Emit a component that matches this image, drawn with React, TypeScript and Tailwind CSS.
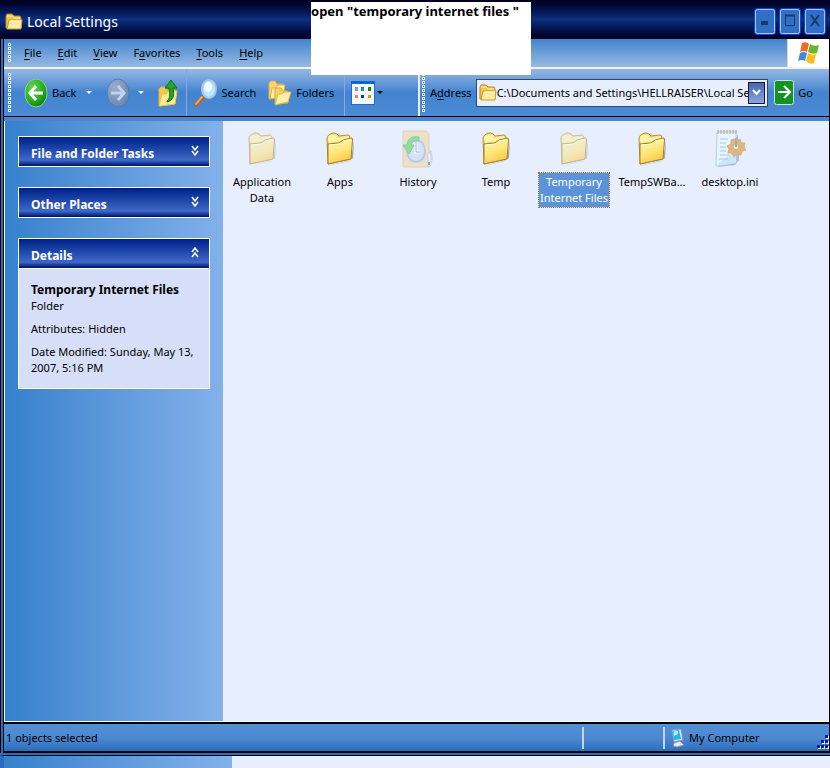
import type { ReactNode } from "react"

function FolderIcon({ faded = false }: { faded?: boolean }) {
  return (
    <svg width="30" height="34" viewBox="0 0 30 34" opacity={faded ? 0.5 : 1}>
      <defs>
        <linearGradient id="folderFront" x1="0" y1="0" x2="0.4" y2="1">
          <stop offset="0" stopColor="#fffbb4" />
          <stop offset="0.6" stopColor="#fee67a" />
          <stop offset="1" stopColor="#fbcb48" />
        </linearGradient>
      </defs>
      <path d="M3 34 L24 29 L28 26 L29 8 L26 28 Z" fill="#6c6e84" opacity="0.6" />
      <path d="M2 6 Q2 4 4 3 L6 1.500 Q9 0 12 2 L14 4 L23 3 Q25 3 25 6 L25 27 L3 32 Z" fill="#f9dc66" stroke="#b5933a" />
      <path d="M3 7 Q3 4 6 3 L11 3 L13 6 L23 4 L24 7 L4 11 Z" fill="#fff5aa" />
      <path d="M3 12 L14 11 L18 8 L26 6 Q28 6 27.500 8 L26 27 L3 32 Z" fill="url(#folderFront)" stroke="#a07d26" />
      <path d="M4 13 L14.500 12 L18.500 9 L26 7.500" fill="none" stroke="#fffdd8" />
    </svg>
  )
}

function HistoryIcon() {
  return (
    <svg width="32" height="38" viewBox="0 0 32 38" opacity="0.6">
      <path d="M25 35 L31 30 L30 21 L26 19 Z" fill="#c3c8d8" />
      <path d="M1 1 H24 L27 4 V37 H1 Z" fill="#eed9a4" stroke="#dcc288" />
      <path d="M26 23 h2 l1 3 v9 l-2 2 h-1 Z" fill="#f8f9ff" stroke="#b4bed6" />
      <path d="M26 32 h2 v3 h-2 Z" fill="#3978dc" />
      <ellipse cx="14" cy="21" rx="9" ry="11" fill="#cbdcf2" stroke="#9db3d4" strokeWidth="2" />
      <path d="M14 12 V22 H19" fill="none" stroke="#fff" strokeWidth="3" />
      <path d="M14 12 V22 H19" fill="none" stroke="#7496c4" />
      <path d="M17 7 Q6 5 5 15 H1 L7 24 L12 15 H9 Q10 10 17 11 Z" fill="#62ce69" stroke="#4db359" />
    </svg>
  )
}

function IniIcon() {
  return (
    <svg width="32" height="40" viewBox="0 0 32 40" opacity="0.75">
      <path d="M4 38 L21 36 L25 31 L24 5 Z" fill="#9caccc" />
      <path d="M3 3 L22 3 L22 34 L2 37 Z" fill="#eaf6ff" stroke="#a4c6e2" />
      <path d="M2 37 L22 34 L22 20 Z" fill="#bfe2fa" />
      <path d="M4 1v4M7 1v4M10 1v4M13 1v4M16 1v4M19 1v4M22 1v4" stroke="#8f8a74" />
      <path d="M3 2h20" stroke="#c5ad56" strokeDasharray="2 1" />
      <path d="M6 10h8M6 14h6M6 18h6M6 22h6M6 26h9M5 30h9" stroke="#8fbfea" />
      <path d="M20 10l3 2 3-2 1 4 4 0 -1 4 2 3-4 1-1 4-4-1-3 3-2-4-4 0 1-4-2-3 4-2 0-4Z" fill="#dda451" stroke="#cf9a55" />
      <circle cx="22" cy="18" r="2" fill="#eaf1fb" />
      <path d="M22 9v9" stroke="#8796a9" strokeWidth="2" />
    </svg>
  )
}

function OpenFolder() {
  return (
    <svg width="18" height="18" viewBox="0 0 18 18" className="shrink-0">
      <path d="M1 15V3l1-2h5l2 2h6l1 2v10Z" fill="#f3c648" stroke="#b98a24" />
      <path d="M2 3h5l2 2h6" stroke="#fff0a8" fill="none" />
      <path d="M2 16 4 7h13l-1 9H2Z" fill="#ffeb9c" stroke="#c99a35" />
      <path d="M5 8h11" stroke="#fffbe0" />
    </svg>
  )
}

function RoundArrow({ back = false }: { back?: boolean }) {
  return (
    <svg width="24" height="30" viewBox="0 0 24 30">
      <defs>
        <radialGradient id="greenBall" cx="0.35" cy="0.3" r="0.8">
          <stop offset="0" stopColor="#62d64c" />
          <stop offset="0.6" stopColor="#28ad20" />
          <stop offset="1" stopColor="#08790c" />
        </radialGradient>
        <radialGradient id="greyBall" cx="0.35" cy="0.3" r="0.8">
          <stop offset="0" stopColor="#9aaecb" />
          <stop offset="1" stopColor="#6483ae" />
        </radialGradient>
      </defs>
      <ellipse cx="12" cy="15" rx="11" ry="14" fill={back ? "url(#greenBall)" : "url(#greyBall)"} stroke={back ? "#8fcf9a" : "#537cb4"} />
      <path
        d={back ? "M19 15H6M12 8L6 15L12 22" : "M5 15H18M12 8L18 15L12 22"}
        fill="none"
        stroke={back ? "#fff" : "#c0d4ef"}
        strokeWidth="3"
      />
    </svg>
  )
}

function UpFolder() {
  return (
    <svg width="20" height="28" viewBox="0 0 20 28">
      <path d="M1 26V10l2-2h4l2 3h8v14L2 27Z" fill="#f4c84a" stroke="#e3b444" />
      <path d="M1 27 4 15h4l3-3h8l-2 13Z" fill="#ffeb98" stroke="#edc04c" />
      <path d="M9 22Q13 20 11 9H7L13 1L19 9H15Q18 21 9 23Z" fill="#25a326" stroke="#0b7610" />
    </svg>
  )
}

function SearchIcon() {
  return (
    <svg width="26" height="30" viewBox="0 0 26 30">
      <path d="M3 27 10 19" stroke="#b9602c" strokeWidth="4" strokeLinecap="round" />
      <path d="M3 26 9 19" stroke="#f6a151" strokeWidth="2" strokeLinecap="round" />
      <ellipse cx="16" cy="11" rx="7" ry="9" fill="#b9e8ff" stroke="#a9c3ea" strokeWidth="2" />
      <ellipse cx="15" cy="9" rx="4" ry="5" fill="#f5fdff" />
    </svg>
  )
}

function FoldersIcon() {
  return (
    <svg width="24" height="26" viewBox="0 0 24 26">
      <path d="M1 19V3l2-2h4l2 3h6v12Z" fill="#f9d66c" stroke="#dcb040" />
      <path d="M2 19 4 8h4l2-3h7l-2 12Z" fill="#ffeda2" stroke="#dfb244" />
      <path d="M7 24V9l2-1h4l2 3h5v12Z" fill="#f8d264" stroke="#d9a838" />
      <path d="M7 25 10 14h4l2-2h7l-3 10Z" fill="#fff0aa" stroke="#e2b64a" />
    </svg>
  )
}

function ViewsIcon() {
  return (
    <svg width="24" height="24" viewBox="0 0 24 24">
      <rect x="0.500" y="0.500" width="23" height="23" fill="#f6faff" stroke="#176fd2" />
      <rect width="24" height="3" fill="#0866cf" />
      <rect x="4" y="6" width="3" height="4" fill="#9b8fca" />
      <rect x="10" y="6" width="3" height="4" fill="#1783ec" />
      <rect x="17" y="6" width="3" height="4" fill="#099209" />
      <rect x="4" y="14" width="3" height="3" fill="#ff7850" />
      <rect x="10" y="14" width="3" height="3" fill="#0b3ba7" />
      <rect x="17" y="14" width="3" height="3" fill="#d19a08" />
    </svg>
  )
}

function WindowsFlag() {
  return (
    <svg width="22" height="24" viewBox="0 0 22 24">
      <path d="M4 2Q8 0 11 3L9 11Q6 9 2 11Z" fill="#f06b2a" />
      <path d="M12 3Q16 6 21 4L19 12Q15 14 10 11Z" fill="#69b82c" />
      <path d="M2 12Q6 10 9 12L7 20Q4 18 0 20Z" fill="#4388dc" />
      <path d="M10 12Q14 15 18 13L16 22Q12 24 8 20Z" fill="#f8bd18" />
    </svg>
  )
}

function ComputerIcon() {
  return (
    <svg width="14" height="20" viewBox="0 0 14 20">
      <path d="M1 2 10 1 12 12 3 14Z" fill="#d9e4f3" stroke="#8498b9" />
      <path d="M2 3 8 2 10 11 3 12Z" fill="#20b5f5" />
      <path d="M3 3 7 3 7 6 3 8Z" fill="#a7efff" />
      <path d="M3 15 9 13 13 17 6 19 2 18Z" fill="#e6e7ef" stroke="#8b92a8" />
    </svg>
  )
}

function Caret({ dark = false }: { dark?: boolean }) {
  return (
    <svg width="6" height="3" viewBox="0 0 6 3">
      <path d="M0 0h6L3 3Z" fill={dark ? "#000" : "#fff"} />
    </svg>
  )
}

function Grip({ rows }: { rows: number }) {
  return (
    <svg width="4" height={rows * 4} viewBox={`0 0 4 ${rows * 4}`} className="shrink-0">
      {Array.from({ length: rows }).map((_, i) => (
        <g key={i}>
          <rect x="0" y={i * 4} width="3" height="3" fill="#e8effa" />
          <rect x="1" y={i * 4 + 1} width="1" height="1" fill="#4a78c0" />
        </g>
      ))}
    </svg>
  )
}

function Chevrons({ up = false }: { up?: boolean }) {
  return (
    <svg width="8" height="11" viewBox="0 0 8 11" fill="none" stroke="#fff" strokeWidth="1.500">
      <path d={up ? "M1 5L4 1L7 5M1 10L4 6L7 10" : "M1 1L4 5L7 1M1 6L4 10L7 6"} />
    </svg>
  )
}

const menus = [
  { before: "", key: "F", after: "ile" },
  { before: "", key: "E", after: "dit" },
  { before: "", key: "V", after: "iew" },
  { before: "F", key: "a", after: "vorites" },
  { before: "", key: "T", after: "ools" },
  { before: "", key: "H", after: "elp" },
]

const items = [
  { name: "Application Data", icon: <FolderIcon faded /> },
  { name: "Apps", icon: <FolderIcon /> },
  { name: "History", icon: <HistoryIcon /> },
  { name: "Temp", icon: <FolderIcon /> },
  { name: "Temporary Internet Files", icon: <FolderIcon faded />, selected: true },
  { name: "TempSWBa...", icon: <FolderIcon /> },
  { name: "desktop.ini", icon: <IniIcon /> },
]

function TitleBar() {
  return (
    <header className="flex h-[39px] shrink-0 items-center bg-linear-to-b from-[#00001e] via-[#0e2f80] to-[#000020] pr-1 pl-[5px] pt-1">
      <OpenFolder />
      <h1 className="ml-1 flex-1 text-[14px] leading-5 text-white">Local Settings</h1>
      <div className="flex gap-[3px]">
        <CaptionButton label="Minimize">
          <path d="M6 12h7v4H6Z" fill="#153a70" />
        </CaptionButton>
        <CaptionButton label="Maximize">
          <path d="M5.500 6.500h9v10h-9Z" fill="none" stroke="#153a70" />
          <path d="M5 6.500h10" stroke="#153a70" strokeWidth="2" />
        </CaptionButton>
        <CaptionButton label="Close">
          <path d="M6 6L14 17M14 6L6 17" fill="none" stroke="#153a70" strokeWidth="2" />
        </CaptionButton>
      </div>
    </header>
  )
}

function CaptionButton({ label, children }: { label: string; children: ReactNode }) {
  return (
    <button aria-label={label} className="flex h-[27px] w-[22px] items-center justify-center rounded-[3px] border border-[#0646e5] bg-[#316fc5]">
      <svg width="20" height="25" viewBox="0 0 20 25">
        <rect x="0.500" y="0.500" width="19" height="24" rx="2" fill="none" stroke="#b3c6e6" />
        {children}
      </svg>
    </button>
  )
}

function MenuBar() {
  return (
    <div className="flex h-[30px] shrink-0 border-b-2 border-[#f3f2ee] bg-linear-to-b from-[#4284cc] to-[#96b9e3]">
      <div className="flex flex-1 items-center pl-1">
        <Grip rows={5} />
        <nav className="ml-3 flex gap-4">
          {menus.map((m) => (
            <button key={m.after}>
              {m.before}
              <u className="underline-offset-2">{m.key}</u>
              {m.after}
            </button>
          ))}
        </nav>
      </div>
      <div className="flex w-[42px] items-center justify-center border-l border-[#d8d8d0] bg-white">
        <WindowsFlag />
      </div>
    </div>
  )
}

function ToolBar() {
  return (
    <div className="flex h-12 shrink-0 border-b border-black bg-linear-to-b from-[#95b8e4] via-[#4284cf] to-[#4c8bd5]">
      <div className="flex w-[414px] shrink-0 items-center pl-1">
        <Grip rows={10} />
        <button className="ml-3 flex items-center gap-1">
          <RoundArrow back />
          Back
        </button>
        <button aria-label="Back history" className="ml-2.5">
          <Caret />
        </button>
        <button aria-label="Forward" className="ml-3.5">
          <RoundArrow />
        </button>
        <button aria-label="Forward history" className="ml-2">
          <Caret />
        </button>
        <button aria-label="Up" className="ml-3.5">
          <UpFolder />
        </button>
        <div className="ml-2 h-full w-px bg-[#8ba4e4]" />
        <button className="ml-1.5 flex items-center gap-0.5">
          <SearchIcon />
          Search
        </button>
        <button className="ml-3 flex items-center gap-1">
          <FoldersIcon />
          Folders
        </button>
        <div className="ml-2.5 h-full w-px bg-[#9f9ee0]" />
        <button aria-label="Views" className="ml-1.5 flex items-center gap-0.5">
          <ViewsIcon />
          <Caret dark />
        </button>
      </div>
      <div className="flex min-w-0 flex-1 items-center border-l-2 border-[#f0ede6] pl-0.5">
        <Grip rows={10} />
        <label htmlFor="address" className="ml-1 shrink-0">
          A<u className="underline-offset-2">d</u>dress
        </label>
        <div className="ml-1 flex h-7 min-w-0 flex-1 items-center border border-[#31486c] bg-[#e7eefe] px-0.5">
          <OpenFolder />
          <input
            id="address"
            className="min-w-0 flex-1 bg-transparent text-black outline-none"
            defaultValue="C:\Documents and Settings\HELLRAISER\Local Settings"
          />
          <button aria-label="Show addresses" className="flex h-[22px] w-[17px] items-center justify-center border border-[#101a40] bg-linear-to-b from-[#4767ae] to-[#8ba6db]">
            <svg width="9" height="8" viewBox="0 0 9 8">
              <path d="M1 1L4.500 5L8 1" fill="none" stroke="#fff" strokeWidth="2" />
            </svg>
          </button>
        </div>
        <button className="mr-4 ml-1.5 flex shrink-0 items-center gap-1">
          <svg width="20" height="25" viewBox="0 0 20 25">
            <rect x="0.500" y="0.500" width="19" height="24" rx="2" fill="#169225" stroke="#c7e4d2" />
            <path d="M4 12H15M10 6L16 12L10 18" fill="none" stroke="#fff" strokeWidth="2" />
          </svg>
          Go
        </button>
      </div>
    </div>
  )
}

function TaskHeader({ title, up = false }: { title: string; up?: boolean }) {
  return (
    <button className="flex h-[31px] w-full items-center justify-between border border-white bg-linear-to-b from-[#001e88] via-[#3f68c8] via-80% to-[#000f68] pr-2.5 pl-3 pt-1 text-[12px] font-bold text-white">
      {title}
      <span className="pb-1.5">
        <Chevrons up={up} />
      </span>
    </button>
  )
}

function Sidebar() {
  return (
    <aside className="w-[219px] shrink-0 border-l border-white bg-linear-to-r from-[#3581cc] to-[#83b1ea] px-[13px] pt-[15px]">
      <div className="flex flex-col gap-5">
        <TaskHeader title="File and Folder Tasks" />
        <TaskHeader title="Other Places" />
        <section>
          <TaskHeader title="Details" up />
          <div className="border border-t-0 border-white bg-[#d6dff7] px-3 pt-[13px] pb-3">
            <h2 className="text-[12px] leading-4 font-bold">Temporary Internet Files</h2>
            <p>Folder</p>
            <p className="mt-[7px]">Attributes: Hidden</p>
            <p className="mt-[7px]">Date Modified: Sunday, May 13, 2007, 5:16 PM</p>
          </div>
        </section>
      </div>
    </aside>
  )
}

function FileList() {
  return (
    <main className="flex flex-1 flex-wrap content-start bg-[#e7eefe]">
      {items.map((item) => (
        <button key={item.name} className="flex w-[78px] flex-col items-center pt-1.5">
          <span className="mb-px flex h-11 items-center">{item.icon}</span>
          <span
            className={
              item.selected
                ? "w-[72px] border border-dotted border-[#a86c24] bg-[#5a93da] bg-clip-padding py-px text-white"
                : "max-w-[72px] border border-transparent py-px"
            }
          >
            {item.name}
          </span>
        </button>
      ))}
    </main>
  )
}

function StatusBar() {
  return (
    <footer className="flex h-[31px] shrink-0 items-center border-y-2 border-black bg-linear-to-b from-[#528fd5] via-[#4c89d1] to-[#2b6dbc] pl-0.5">
      <p className="flex-1">1 objects selected</p>
      <div className="h-[22px] w-[81px] border-l-2 border-[#c8cff2]" />
      <div className="flex h-[22px] w-[166px] items-center gap-1 border-l-2 border-[#c8cff2] pl-1.5">
        <ComputerIcon />
        <span className="flex-1">My Computer</span>
        <svg width="13" height="14" viewBox="0 0 13 14" className="self-end">
          {[[9, 0], [5, 5], [9, 5], [1, 10], [5, 10], [9, 10]].map(([x, y]) => (
            <g key={`${x}-${y}`}>
              <rect x={x + 1} y={y + 1} width="3" height="3" fill="#e9f0ff" />
              <rect x={x} y={y} width="3" height="3" fill="#0818a8" />
            </g>
          ))}
        </svg>
      </div>
    </footer>
  )
}

export default function App() {
  return (
    <div className="relative flex h-screen flex-col overflow-hidden bg-[#2b6dbc] font-['Noto_Sans',sans-serif] text-[11px] leading-4 text-black">
      <TitleBar />
      <div className="flex min-h-0 flex-1 border-l border-black pl-0.5">
        <div className="flex min-w-0 flex-1 flex-col border-x border-black">
          <MenuBar />
          <ToolBar />
          <div className="flex min-h-0 flex-1 border-t-4 border-b border-t-[#4886d0] border-b-white">
            <Sidebar />
            <FileList />
          </div>
          <StatusBar />
        </div>
      </div>
      {/* top edge of the window behind */}
      <div className="mt-0.5 flex h-[13px] shrink-0 border-t border-l-4 border-t-black border-l-[#2b6dbc]">
        <div className="w-[228px] bg-linear-to-r from-[#3581cc] to-[#83b1ea]" />
        <div className="flex-1 bg-[#e7eefe]" />
      </div>
      <p className="absolute top-0.5 left-[311px] h-[73px] w-[220px] bg-white text-[13px] leading-[18px] font-bold">
        open "temporary internet files "
      </p>
    </div>
  )
}
